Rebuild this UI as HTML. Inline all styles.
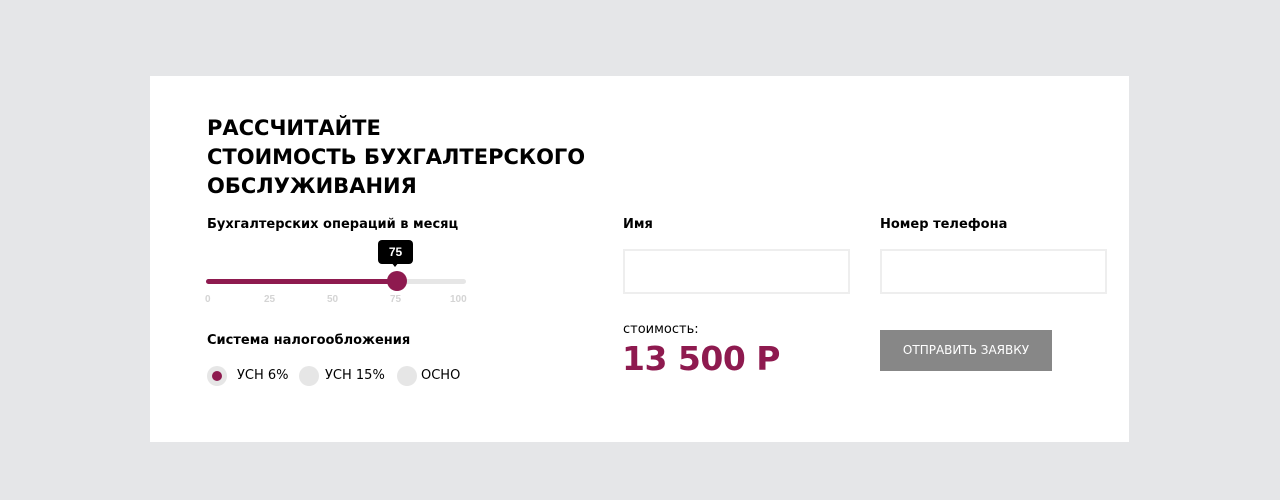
<!DOCTYPE html>
<html><head><meta charset="utf-8"><style>
body{margin:0;width:1280px;height:500px;background:#e5e6e8;font-family:"DejaVu Sans","Liberation Sans",sans-serif;position:relative;overflow:hidden}
.card{position:absolute;left:150px;top:76px;width:979px;height:366px;background:#fff}
.a{position:absolute;color:#000}
h1{position:absolute;left:207px;top:114px;margin:0;font-size:21px;line-height:29px;font-weight:bold;letter-spacing:0}
.lbl{font-size:13px;font-weight:bold}
.inp{position:absolute;border:2px solid #eeeeee;box-sizing:border-box;width:227px;height:45px}
</style></head><body>
<div class="card"></div>
<h1>РАССЧИТАЙТЕ<br>СТОИМОСТЬ БУХГАЛТЕРСКОГО<br>ОБСЛУЖИВАНИЯ</h1>
<div class="a lbl" style="left:207px;top:217px">Бухгалтерских операций в месяц</div>
<div class="a lbl" style="left:623px;top:217px">Имя</div>
<div class="a lbl" style="left:880px;top:217px">Номер телефона</div>
<div class="inp" style="left:623px;top:249px"></div>
<div class="inp" style="left:880px;top:249px"></div>
<div style="position:absolute;left:206px;top:279px;width:260px;height:5px;border-radius:3px;background:#e6e6e6"></div>
<div style="position:absolute;left:206px;top:279px;width:192px;height:5px;border-radius:3px;background:#8e1a4f"></div>
<div style="position:absolute;left:387px;top:271px;width:20px;height:20px;border-radius:50%;background:#8e1a4f"></div>
<div style="position:absolute;left:378px;top:240px;width:35px;height:24px;border-radius:4px;background:#000;color:#fff;font:bold 12px 'Liberation Sans',sans-serif;text-align:center;line-height:24px">75</div>
<div style="position:absolute;left:391px;top:262px;width:0;height:0;border-left:4px solid transparent;border-right:4px solid transparent;border-top:5px solid #000"></div>
<div style="position:absolute;top:294px;left:0;font:bold 10px 'Liberation Sans',sans-serif;color:#d4d4d4">
<span style="position:absolute;left:205px">0</span><span style="position:absolute;left:264px">25</span><span style="position:absolute;left:327px">50</span><span style="position:absolute;left:390px">75</span><span style="position:absolute;left:450px">100</span></div>
<div class="a lbl" style="left:207px;top:333px">Система налогообложения</div>
<div style="position:absolute;left:207px;top:366px;width:20px;height:20px;border-radius:50%;background:#e6e6e6"></div>
<div style="position:absolute;left:212px;top:371px;width:10px;height:10px;border-radius:50%;background:#8e1a4f"></div>
<div class="a" style="left:237px;top:368px;font-size:13px">УСН 6%</div>
<div style="position:absolute;left:299px;top:366px;width:20px;height:20px;border-radius:50%;background:#e6e6e6"></div>
<div class="a" style="left:325px;top:368px;font-size:13px">УСН 15%</div>
<div style="position:absolute;left:397px;top:366px;width:20px;height:20px;border-radius:50%;background:#e6e6e6"></div>
<div class="a" style="left:421px;top:368px;font-size:13px">ОСНО</div>
<div class="a" style="left:623px;top:322px;font-size:13px">стоимость:</div>
<div class="a" style="left:622px;top:339px;font-size:33px;letter-spacing:-0.5px;font-weight:bold;color:#8e1a4f">13 500 Р</div>
<div style="position:absolute;left:880px;top:330px;width:172px;height:41px;background:#878787;color:#fff;font-size:12px;text-align:center;line-height:41px">ОТПРАВИТЬ ЗАЯВКУ</div>
</body></html>
